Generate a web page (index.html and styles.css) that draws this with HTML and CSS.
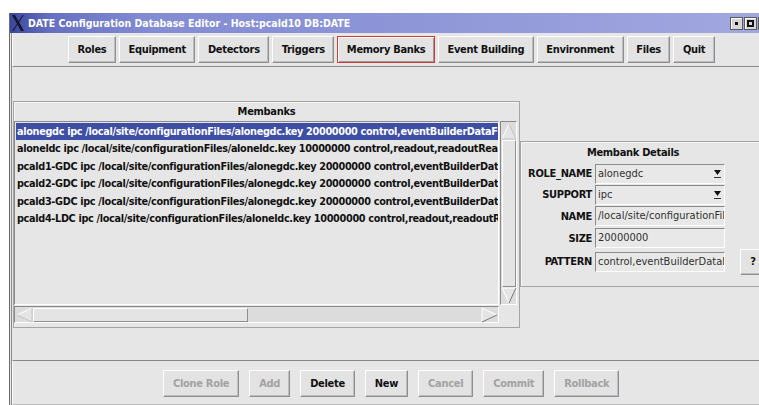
FILE: index.html
```html
<!DOCTYPE html>
<html lang="en">
<head>
<meta charset="utf-8">
<title>DATE Configuration Database Editor</title>
<link rel="stylesheet" href="styles.css">
</head>
<body>
<div class="window">
  <div class="titlebar">
    <svg class="xlogo" width="12" height="16" viewBox="0 0 12 16">
      <polygon points="0,0 3,0 12,16 9,16" fill="#14162a"/>
      <polygon points="10.6,0 11.8,0 1.4,16 0.2,16" fill="#14162a"/>
    </svg>
    <span class="title">DATE Configuration Database Editor - Host:pcald10 DB:DATE</span>
    <div class="wm-buttons">
      <span class="wm-btn"><span class="wm-dot"></span></span>
      <span class="wm-btn"><span class="wm-box"></span></span>
      <span class="wm-btn"><span class="wm-box"></span></span>
    </div>
  </div>

  <div class="client">
    <div class="menubar">
      <button class="btn">Roles</button>
      <button class="btn">Equipment</button>
      <button class="btn">Detectors</button>
      <button class="btn">Triggers</button>
      <button class="btn btn-current">Memory Banks</button>
      <button class="btn">Event Building</button>
      <button class="btn">Environment</button>
      <button class="btn">Files</button>
      <button class="btn">Quit</button>
    </div>

    <div class="workspace">
      <div class="list-frame">
        <div class="frame-title">Membanks</div>
        <div class="list-grid">
          <div class="listbox">
            <div class="row selected">alonegdc ipc /local/site/configurationFiles/alonegdc.key 20000000 control,eventBuilderDataFlow</div>
            <div class="row">aloneldc ipc /local/site/configurationFiles/aloneldc.key 10000000 control,readout,readoutReady</div>
            <div class="row">pcald1-GDC ipc /local/site/configurationFiles/alonegdc.key 20000000 control,eventBuilderDataFlow</div>
            <div class="row">pcald2-GDC ipc /local/site/configurationFiles/alonegdc.key 20000000 control,eventBuilderDataFlow</div>
            <div class="row">pcald3-GDC ipc /local/site/configurationFiles/alonegdc.key 20000000 control,eventBuilderDataFlow</div>
            <div class="row">pcald4-LDC ipc /local/site/configurationFiles/aloneldc.key 10000000 control,readout,readoutReady</div>
          </div>
          <div class="vscroll">
            <svg class="arrow" width="16" height="17" viewBox="0 0 16 17">
              <polygon points="8,1 15,16 1,16" fill="#e4e4e4"/>
              <line x1="1" y1="16" x2="8" y2="1" stroke="#ffffff"/>
              <line x1="8" y1="1" x2="15" y2="16" stroke="#c4c4c4"/>
              <line x1="1" y1="16" x2="15" y2="16" stroke="#c4c4c4"/>
            </svg>
            <div class="vslider"></div>
            <svg class="arrow" width="16" height="17" viewBox="0 0 16 17">
              <polygon points="1,1 15,1 8,16" fill="#e4e4e4"/>
              <line x1="1" y1="1" x2="15" y2="1" stroke="#ffffff"/>
              <line x1="1" y1="1" x2="8" y2="16" stroke="#ffffff"/>
              <line x1="15" y1="1" x2="8" y2="16" stroke="#7a7a7a"/>
            </svg>
          </div>
          <div class="hscroll">
            <svg class="arrow" width="17" height="16" viewBox="0 0 17 16">
              <polygon points="1,8 16,1 16,15" fill="#e4e4e4"/>
              <line x1="1" y1="8" x2="16" y2="1" stroke="#ffffff"/>
              <line x1="1" y1="8" x2="16" y2="15" stroke="#c4c4c4"/>
              <line x1="16" y1="1" x2="16" y2="15" stroke="#c4c4c4"/>
            </svg>
            <div class="hslider"></div>
            <div class="htrough"></div>
            <svg class="arrow" width="17" height="16" viewBox="0 0 17 16">
              <polygon points="1,1 16,8 1,15" fill="#e4e4e4"/>
              <line x1="1" y1="1" x2="16" y2="8" stroke="#ffffff"/>
              <line x1="1" y1="1" x2="1" y2="15" stroke="#ffffff"/>
              <line x1="1" y1="15" x2="16" y2="8" stroke="#7a7a7a"/>
            </svg>
          </div>
          <div class="corner"></div>
        </div>
      </div>

      <div class="details">
        <div class="details-title">Membank Details</div>
        <div class="spacer"></div>

        <label class="field-label">ROLE_NAME</label>
        <div class="combo"><span class="combo-text">alonegdc</span><svg class="combo-arrow" width="7" height="8" viewBox="0 0 7 8"><polygon points="0,0 7,0 3.5,5" fill="#111"/><rect x="0" y="7" width="7" height="1" fill="#333"/></svg></div>
        <div class="spacer"></div>

        <label class="field-label">SUPPORT</label>
        <div class="combo"><span class="combo-text">ipc</span><svg class="combo-arrow" width="7" height="8" viewBox="0 0 7 8"><polygon points="0,0 7,0 3.5,5" fill="#111"/><rect x="0" y="7" width="7" height="1" fill="#333"/></svg></div>
        <div class="spacer"></div>

        <label class="field-label">NAME</label>
        <div class="entry">/local/site/configurationFiles/alonegdc.key</div>
        <div class="spacer"></div>

        <label class="field-label">SIZE</label>
        <div class="entry">20000000</div>
        <div class="spacer"></div>

        <label class="field-label">PATTERN</label>
        <div class="entry">control,eventBuilderDataFlow</div>
        <button class="btn btn-help">?</button>
      </div>
    </div>

    <div class="actions">
      <button class="btn btn-action" disabled>Clone Role</button>
      <button class="btn btn-action" disabled>Add</button>
      <button class="btn btn-action">Delete</button>
      <button class="btn btn-action">New</button>
      <button class="btn btn-action" disabled>Cancel</button>
      <button class="btn btn-action" disabled>Commit</button>
      <button class="btn btn-action" disabled>Rollback</button>
    </div>
  </div>
</div>
</body>
</html>
```

FILE: styles.css
```css
* {
  box-sizing: border-box;
}

html,
body {
  margin: 0;
  padding: 0;
  background: #ffffff;
  overflow: hidden;
}

body {
  width: 759px;
  height: 405px;
  font-family: "DejaVu Sans Condensed", "DejaVu Sans", sans-serif;
  font-size: 11px;
  color: #111;
}

/* ---------- window frame ---------- */
.window {
  margin: 13px 0 0 9px;
  width: 762px;
  height: 392px;
  background: #e6e6e6;
  border-left: 1px solid #6c6c6c;
  display: flex;
  flex-direction: column;
}

.titlebar {
  flex: none;
  height: 20px;
  display: flex;
  align-items: center;
  background: linear-gradient(to right, #3a479e 0px, #6670c0 40px, #838bd3 140px, #8e96d8 400px, #a0a6de 720px);
}

.xlogo {
  margin-left: 2px;
  flex: none;
}

.title {
  margin-left: 4px;
  font-family: "DejaVu Sans Condensed", "DejaVu Sans", sans-serif;
  font-weight: bold;
  font-size: 10.5px;
  color: #ffffff;
  white-space: nowrap;
}

.wm-buttons {
  margin-left: auto;
  display: flex;
  gap: 1px;
}

.wm-btn {
  width: 13px;
  height: 13px;
  background: #d6d6d6;
  border: 1px solid #5a5a5a;
  box-shadow: inset 1px 1px 0 #ffffff;
  display: flex;
  align-items: center;
  justify-content: center;
}

.wm-dot {
  width: 3px;
  height: 3px;
  background: #111;
}

.wm-box {
  width: 7px;
  height: 7px;
  border: 2px solid #111;
}

/* ---------- client area ---------- */
.client {
  flex: 1;
  margin-left: 1px;
  border-left: 1px solid #8c8c8c;
  display: flex;
  flex-direction: column;
}

.btn {
  font-family: inherit;
  font-size: 11px;
  font-weight: bold;
  letter-spacing: -0.3px;
  color: #111;
  background: #e3e3e3;
  border: 1px solid;
  border-color: #ffffff #8e8e8e #8e8e8e #ffffff;
  box-shadow: inset -1px -1px 0 #bdbdbd;
  padding: 0 8.5px;
  margin: 0;
  height: 27px;
  white-space: nowrap;
}

.btn-current {
  border-color: #d23a3a;
  box-shadow: inset 1px 1px 0 #ffffff, inset -1px -1px 0 #9a9a9a;
}

.btn:disabled {
  color: #a2a2a2;
}

.menubar {
  flex: none;
  height: 34px;
  display: flex;
  align-items: flex-start;
  gap: 3px;
  padding: 3px 0 0 55px;
  border-left: 1px solid #fbfbfb;
  border-bottom: 1px solid #8a8a8a;
}

/* ---------- workspace ---------- */
.workspace {
  flex: none;
  height: 293px;
  display: flex;
  align-items: flex-start;
  padding: 34px 0 0 1px;
}

.list-frame {
  flex: none;
  width: 507px;
  height: 227px;
  border: 1px solid #a4a4a4;
  box-shadow: inset 1px 1px 0 #f6f6f6;
  display: flex;
  flex-direction: column;
}

.frame-title {
  height: 19px;
  line-height: 19px;
  text-align: center;
  font-weight: bold;
  letter-spacing: -0.3px;
}

.list-grid {
  display: grid;
  grid-template-columns: 485px 18px;
  grid-template-rows: 184px 18px;
}

.listbox {
  border: 1px solid;
  border-color: #8a8a8a #ffffff #ffffff #8a8a8a;
  padding: 1px 0 0 1px;
  overflow: hidden;
}

.row {
  height: 17.4px;
  line-height: 17px;
  padding-left: 1px;
  white-space: nowrap;
  font-size: 10.8px;
  font-weight: bold;
  letter-spacing: -0.33px;
}

.row.selected {
  background: #3e4ea4;
  color: #ffffff;
}

.vscroll {
  margin-left: 1px;
  border: 1px solid;
  border-color: #8a8a8a #ffffff #ffffff #8a8a8a;
  background: #dcdcdc;
  display: flex;
  flex-direction: column;
  align-items: center;
  padding-top: 1px;
}

.vslider {
  flex: 1;
  width: 14px;
  background: #e4e4e4;
  border: 1px solid;
  border-color: #ffffff #8e8e8e #8e8e8e #ffffff;
}

.hscroll {
  margin-top: 1px;
  border: 1px solid;
  border-color: #8a8a8a #ffffff #ffffff #8a8a8a;
  background: #dcdcdc;
  display: flex;
  align-items: center;
  padding-left: 1px;
}

.hslider {
  width: 215px;
  height: 14px;
  background: #e4e4e4;
  border: 1px solid;
  border-color: #ffffff #8e8e8e #8e8e8e #ffffff;
}

.htrough {
  flex: 1;
}

.arrow {
  flex: none;
  display: block;
}

.corner {
  background: #e6e6e6;
}

/* ---------- details panel ---------- */
.details {
  flex: none;
  width: 260px;
  margin-top: 40px;
  height: 146px;
  border: 1px solid #a4a4a4;
  border-right: none;
  box-shadow: inset 1px 1px 0 #f6f6f6;
  display: grid;
  grid-template-columns: 74px 130px 15px 26px;
  grid-template-rows: 21px 21px 21px 22px 22px 25px;
  align-items: center;
}

.details-title {
  grid-column: 1 / 3;
  text-align: center;
  font-weight: bold;
  letter-spacing: -0.3px;
  padding-left: 20px;
}

.spacer {
  grid-column: 3 / 5;
}

.field-label {
  text-align: right;
  font-weight: bold;
  letter-spacing: -0.3px;
  padding-right: 3px;
  white-space: nowrap;
}

.entry,
.combo {
  height: 20px;
  border: 1px solid;
  border-color: #8a8a8a #ffffff #ffffff #8a8a8a;
  background: #e8e8e8;
  font-weight: normal;
  color: #303030;
  padding-left: 2px;
  line-height: 18px;
  white-space: nowrap;
  overflow: hidden;
}

.combo {
  display: flex;
  align-items: center;
}

.combo-text {
  flex: 1;
}

.combo-arrow {
  flex: none;
  margin-right: 3px;
}

.btn-help {
  grid-column: 4;
  height: 26px;
  padding: 0 8px;
  width: 26px;
}

/* ---------- bottom action bar ---------- */
.actions {
  flex: none;
  height: 45px;
  border-top: 1px solid #8a8a8a;
  border-left: 1px solid #fbfbfb;
  border-bottom: 1px solid #bdbdbd;
  display: flex;
  align-items: flex-start;
  gap: 10px;
  padding: 9px 0 0 150px;
}

.btn-action {
  height: 27px;
  padding: 0 9px;
}
```
